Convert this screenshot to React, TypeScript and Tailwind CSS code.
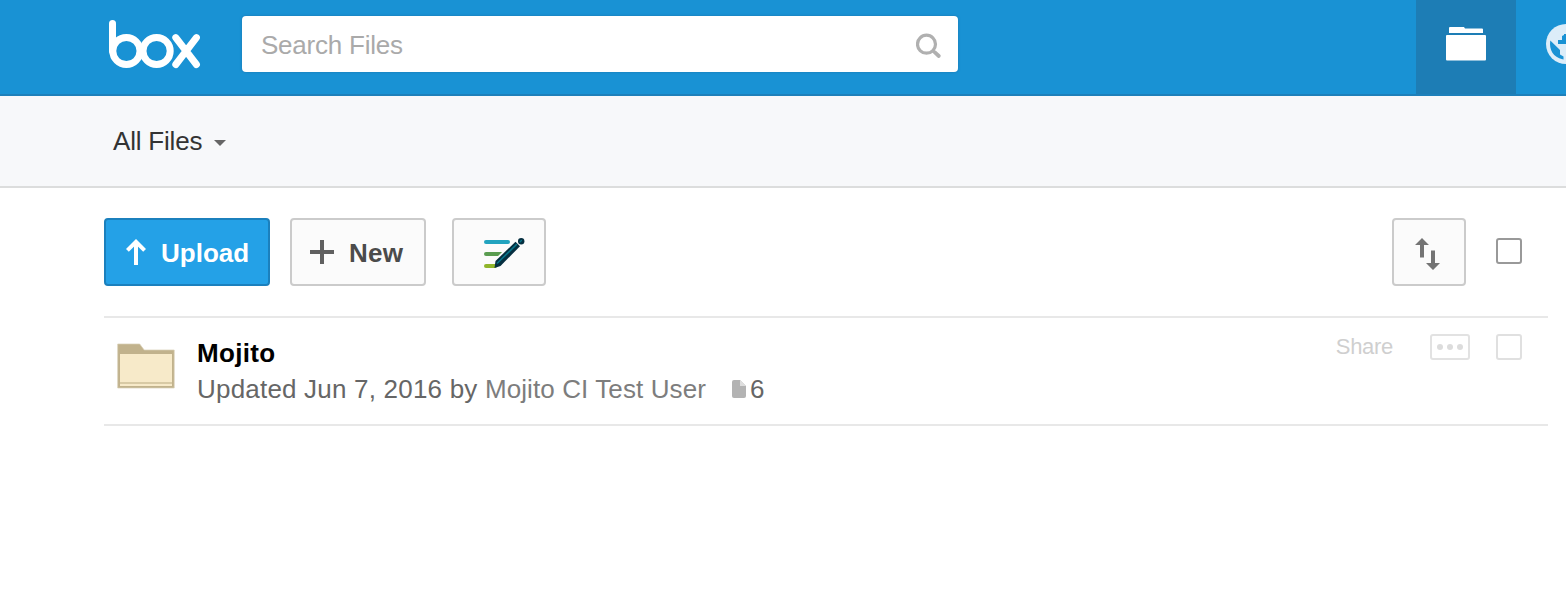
function BoxLogo() {
  return (
    <svg width="94" height="50" viewBox="0 0 94 50" fill="none" stroke="#fff" strokeWidth="7" strokeLinecap="round">
      <path d="M4.500 4.500V32" />
      <circle cx="18.400" cy="32" r="13.600" />
      <circle cx="48.600" cy="32" r="13.600" />
      <path d="M67.800 18.600 88.400 45.500M88.400 18.600 67.800 45.500" />
    </svg>
  );
}

function SearchIcon() {
  return (
    <svg width="26" height="26" viewBox="0 0 26 26" fill="none" stroke="#b0b0b0">
      <circle cx="10.500" cy="11.200" r="9" strokeWidth="3.200" />
      <path d="m16.500 17.500 1.200 1.200" strokeWidth="3" />
      <path d="m18.600 19.200 4.200 3.800" strokeWidth="3.800" strokeLinecap="round" />
    </svg>
  );
}

function FilesTabIcon() {
  return (
    <svg width="40" height="34" viewBox="0 0 40 34" fill="#fff">
      <path d="M3 1q0-1 1-1h14l1 1.500h17q1 0 1 1V6H3z" />
      <rect y="8" width="40" height="25.400" rx="1" />
    </svg>
  );
}

function GlobeIcon() {
  return (
    <svg width="40" height="40" viewBox="0 0 40 40">
      <circle cx="20" cy="20" r="20" fill="#dcedf9" />
      <path d="M4.300 16.500 14 26v4.500l3.500 2v3H20C10 35.500 4 28.500 4 20z" fill="#1992d4" />
      <path d="M12 16h4v-4l2-1v-1h10v10H12z" fill="#1992d4" />
    </svg>
  );
}

function EditIcon() {
  return (
    <svg width="42" height="32" viewBox="0 0 42 32" fill="none" strokeLinecap="round">
      <path d="M3 4h22" stroke="#22a3bf" strokeWidth="4" />
      <path d="M3 16h18" stroke="#5a9c50" strokeWidth="4" />
      <path d="M3 28h9" stroke="#90b52b" strokeWidth="4" />
      <path d="M17 22 35.500 4" stroke="#fbfbfb" strokeWidth="8.500" strokeLinecap="butt" />
      <path d="m11.500 30 1-7L32.500 3.700 37 8.200 17.500 28z" fill="#062f40" />
      <path d="m14.500 25 19-18.500" stroke="#08758a" strokeWidth="1.600" />
      <circle cx="38.200" cy="3.200" r="3.200" fill="#062f40" />
      <path d="m37.200 3.700 1.200-1.200" stroke="#08758a" strokeWidth="1.400" />
    </svg>
  );
}

function SortIcon() {
  return (
    <svg width="26" height="32" viewBox="0 0 26 32" fill="#747474">
      <path d="M7 0 14 7H9v12.500H5V7H0z" />
      <path d="M18 32 11 25h5V12.500h4V25h5z" />
    </svg>
  );
}

function FolderIcon() {
  return (
    <svg width="58" height="46" viewBox="0 0 58 46">
      <path d="M.700 1h22l4.500 6h30v38H.700z" fill="#c1b28c" stroke="#d8cfb6" strokeWidth=".7" />
      <path d="M3 11h52v32H3z" fill="#f7eac9" />
      <path d="M3 40h52" stroke="#d8caa5" strokeWidth="2" />
    </svg>
  );
}

export default function App() {
  return (
    <div className="h-[604px] w-full overflow-hidden bg-white font-['Liberation_Sans',Arial,sans-serif] text-[26px] leading-8">
      <header className="flex h-24 items-start border-b-2 border-[#1e80ba] bg-[#1992d4]">
        <div className="w-[242px] shrink-0 pl-[108px] pt-[19px]">
          <BoxLogo />
        </div>
        <div className="mt-4 flex h-14 w-[716px] shrink-0 items-center justify-between rounded bg-white pl-[19px] pr-4 shadow-[0_0_2px_1px_#1b85c3]">
          <span className="pt-0.5 tracking-[-0.23px] text-[#aaaaaa]">Search Files</span>
          <div className="pt-1">
            <SearchIcon />
          </div>
        </div>
        <nav className="ml-auto flex h-full w-[150px] shrink-0">
          <div className="flex w-[100px] shrink-0 justify-center bg-[#1d7db5] pt-[27px]">
            <FilesTabIcon />
          </div>
          <div className="shrink-0 pl-[30px] pt-6">
            <GlobeIcon />
          </div>
        </nav>
      </header>

      <div className="flex h-[92px] items-center border-b-2 border-[#dcdddd] bg-[#f7f8fa] pl-[113px]">
        <span className="tracking-[-0.2px] text-[#333]">All Files</span>
        <svg className="ml-3 mt-1" width="12" height="6" viewBox="0 0 12 6" fill="#666">
          <path d="M0 0h12L6 6z" />
        </svg>
      </div>

      <main className="pl-[104px] pr-[18px] pt-[30px]">
        <div className="flex h-[98px] items-start">
          <button className="flex h-[68px] w-[166px] items-center rounded border-2 border-[#1b80bd] bg-[#24a1e7] pl-5 font-bold text-white">
            <svg width="20" height="26" viewBox="0 0 20 26" fill="none" stroke="#fff" strokeWidth="4">
              <path d="M10 26V3M1.400 11.400 10 2.800l8.600 8.600" />
            </svg>
            <span className="ml-[15px] pt-0.5">Upload</span>
          </button>
          <button className="ml-5 flex h-[68px] w-[136px] items-center rounded border-2 border-[#cbcbcb] bg-[#fbfbfb] pl-[18px] font-bold text-[#4b4b4b]">
            <svg width="24" height="24" viewBox="0 0 24 24" stroke="#606060" strokeWidth="4">
              <path d="M12 0v24M0 12h24" />
            </svg>
            <span className="ml-[15px] pt-0.5 tracking-[0.3px]">New</span>
          </button>
          <button className="ml-[26px] flex h-[68px] w-[94px] items-center rounded border-2 border-[#cbcbcb] bg-[#fbfbfb] pl-[29px] pt-1">
            <EditIcon />
          </button>
          <button className="ml-auto flex h-[68px] w-[74px] items-center rounded border-2 border-[#cbcbcb] bg-[#fbfbfb] pl-[21px] pt-1">
            <SortIcon />
          </button>
          <div className="ml-[30px] mr-[26px] mt-5 size-[26px] rounded-[3px] border-2 border-[#999]" />
        </div>

        <div className="flex h-[110px] items-start border-y-2 border-[#e8e8e8]">
          <div className="ml-[13px] mt-[25px]">
            <FolderIcon />
          </div>
          <div className="ml-[22px] pt-[19px]">
            <div className="h-9 font-bold tracking-[0.3px] text-black">Mojito</div>
            <div className="flex items-center whitespace-pre text-[#666]">
              <span className="tracking-[0.2px]">Updated Jun 7, 2016 by </span>
              <span className="tracking-[0.1px] text-[#7d7d7d]">Mojito CI Test User</span>
              <svg className="ml-[26px] mr-1" width="14" height="18" viewBox="0 0 14 18">
                <path d="M2 0h6l6 6v10q0 2-2 2H2q-2 0-2-2V2Q0 0 2 0z" fill="#b3b3b3" />
                <path d="M8 0v6h6z" fill="#dedede" />
              </svg>
              <span>6</span>
            </div>
          </div>
          <div className="ml-auto mr-[26px] flex items-center pt-4">
            <span className="text-[22px] leading-[26px] tracking-[-0.3px] text-[#cfcfcf]">Share</span>
            <div className="ml-[37px] flex h-[26px] w-10 items-center justify-center gap-1 rounded-[3px] border-2 border-[#e2e2e2]">
              <span className="size-1.5 rounded-full bg-[#dcdcdc]" />
              <span className="size-1.5 rounded-full bg-[#dcdcdc]" />
              <span className="size-1.5 rounded-full bg-[#dcdcdc]" />
            </div>
            <div className="ml-[26px] size-[26px] rounded-[3px] border-2 border-[#e0e0e0]" />
          </div>
        </div>
      </main>
    </div>
  );
}
